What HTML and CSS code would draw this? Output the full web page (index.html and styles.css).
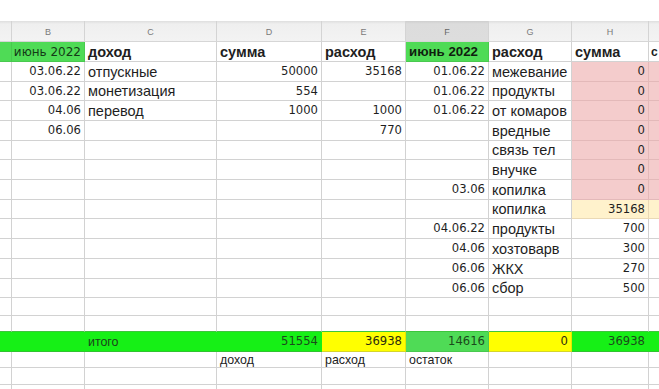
FILE: index.html
```html
<!DOCTYPE html>
<html>
<head>
<meta charset="utf-8">
<link rel="stylesheet" href="styles.css">
</head>
<body>
<div class="topbar"></div>
<div class="sheet">
  <div class="c hd"></div><div class="c hd">B</div><div class="c hd">C</div><div class="c hd">D</div><div class="c hd">E</div><div class="c hd sel">F</div><div class="c hd">G</div><div class="c hd">H</div><div class="c hd last"></div>

  <div class="c mid"></div><div class="c mid num month">июнь 2022</div><div class="c txt b">доход</div><div class="c txt b">сумма</div><div class="c txt b">расход</div><div class="c mid txt b bm">июнь 2022</div><div class="c txt b">расход</div><div class="c txt b">сумма</div><div class="c txt b edge last">с</div>

  <div class="c"></div><div class="c num">03.06.22</div><div class="c txt">отпускные</div><div class="c num">50000</div><div class="c num">35168</div><div class="c num">01.06.22</div><div class="c txt">межевание</div><div class="c num pink">0</div><div class="c pink last"></div>

  <div class="c"></div><div class="c num">03.06.22</div><div class="c txt">монетизация</div><div class="c num">554</div><div class="c"></div><div class="c num">01.06.22</div><div class="c txt">продукты</div><div class="c num pink">0</div><div class="c pink last"></div>

  <div class="c"></div><div class="c num">04.06</div><div class="c txt">перевод</div><div class="c num">1000</div><div class="c num">1000</div><div class="c num">01.06.22</div><div class="c txt">от комаров</div><div class="c num pink">0</div><div class="c pink last"></div>

  <div class="c"></div><div class="c num">06.06</div><div class="c"></div><div class="c"></div><div class="c num">770</div><div class="c"></div><div class="c txt">вредные</div><div class="c num pink">0</div><div class="c pink last"></div>

  <div class="c"></div><div class="c"></div><div class="c"></div><div class="c"></div><div class="c"></div><div class="c"></div><div class="c txt">связь тел</div><div class="c num pink">0</div><div class="c pink last"></div>

  <div class="c"></div><div class="c"></div><div class="c"></div><div class="c"></div><div class="c"></div><div class="c"></div><div class="c txt">внучке</div><div class="c num pink">0</div><div class="c pink last"></div>

  <div class="c"></div><div class="c"></div><div class="c"></div><div class="c"></div><div class="c"></div><div class="c num">03.06</div><div class="c txt">копилка</div><div class="c num pink">0</div><div class="c pink last"></div>

  <div class="c"></div><div class="c"></div><div class="c"></div><div class="c"></div><div class="c"></div><div class="c"></div><div class="c txt">копилка</div><div class="c num cream">35168</div><div class="c cream last"></div>

  <div class="c"></div><div class="c"></div><div class="c"></div><div class="c"></div><div class="c"></div><div class="c num">04.06.22</div><div class="c txt">продукты</div><div class="c num">700</div><div class="c last"></div>

  <div class="c"></div><div class="c"></div><div class="c"></div><div class="c"></div><div class="c"></div><div class="c num">04.06</div><div class="c txt">хозтоварв</div><div class="c num">300</div><div class="c last"></div>

  <div class="c"></div><div class="c"></div><div class="c"></div><div class="c"></div><div class="c"></div><div class="c num">06.06</div><div class="c txt">ЖКХ</div><div class="c num">270</div><div class="c last"></div>

  <div class="c"></div><div class="c"></div><div class="c"></div><div class="c"></div><div class="c"></div><div class="c num">06.06</div><div class="c txt">сбор</div><div class="c num">500</div><div class="c last"></div>

  <div class="c"></div><div class="c"></div><div class="c"></div><div class="c"></div><div class="c"></div><div class="c"></div><div class="c"></div><div class="c"></div><div class="c last"></div>

  <div class="c g-above"></div><div class="c g-above"></div><div class="c g-above"></div><div class="c g-above"></div><div class="c g-above"></div><div class="c g-above"></div><div class="c g-above"></div><div class="c g-above"></div><div class="c g-above last"></div>

  <div class="c lime"></div><div class="c lime"></div><div class="c lime txt sm">итого</div><div class="c lime num gtxt">51554</div><div class="c yel num">36938</div><div class="c mid num gtxt">14616</div><div class="c yel num">0</div><div class="c lime num gtxt">36938</div><div class="c lime last"></div>

  <div class="c"></div><div class="c"></div><div class="c"></div><div class="c txt sm">доход</div><div class="c txt sm">расход</div><div class="c txt sm">остаток</div><div class="c"></div><div class="c"></div><div class="c last"></div>

  <div class="c"></div><div class="c"></div><div class="c"></div><div class="c"></div><div class="c"></div><div class="c"></div><div class="c"></div><div class="c"></div><div class="c last"></div>

  <div class="c"></div><div class="c"></div><div class="c"></div><div class="c"></div><div class="c"></div><div class="c"></div><div class="c"></div><div class="c"></div><div class="c last"></div>
</div>
</body>
</html>
```

FILE: styles.css
```css
* { box-sizing: border-box; }
html, body {
  margin: 0;
  padding: 0;
  background: #ffffff;
  overflow: hidden;
}
body {
  width: 659px;
  height: 389px;
  font-family: "Liberation Sans", Arial, sans-serif;
  color: #1e1e1e;
}
.topbar {
  height: 21px;
  background: #ffffff;
}
.sheet {
  display: grid;
  grid-template-columns: 12px 73px 132px 105px 84px 83px 83px 77px 10px;
  grid-template-rows: 21px 20px 20px 19px 20px 20px 19px 20px 20px 19px 20px 20px 20px 19px 18px 16px 20px 16px 17px 20px;
  width: 659px;
}
.c {
  border-right: 1px solid #d2d2d2;
  border-bottom: 1px solid #d2d2d2;
  white-space: nowrap;
  overflow: hidden;
  display: flex;
  align-items: center;
  font-size: 14.5px;
  line-height: 1;
}
.c.last {
  border-right: none;
}
.hd {
  background: linear-gradient(#dedede 0, #efefef 3px, #f3f3f3 100%);
  justify-content: center;
  font-size: 9px;
  color: #7a7a7a;
  border-right-color: #d4d4d4;
  border-bottom-color: #d6d6d6;
  padding-top: 2px;
}
.hd.sel {
  background: linear-gradient(#cfcfcf 0, #dcdcdc 3px, #dddddd 100%);
  color: #666;
}
.txt {
  justify-content: flex-start;
  padding-left: 3px;
  padding-top: 1px;
}
.edge {
  padding-left: 2px;
  font-size: 12px;
}
.b { font-weight: bold; }
.num {
  justify-content: flex-end;
  padding-right: 3px;
  padding-top: 1px;
  font-family: "DejaVu Sans", Verdana, sans-serif;
  font-size: 11.6px;
}
.month {
  color: #143a17;
  font-size: 12px;
}
.bm {
  font-size: 13.3px;
  color: #0f1f0f;
}
.mid {
  background: #4fdb56;
  border-right-color: #49c94f;
  border-bottom-color: #49c94f;
}
.pink {
  background: #f4cccc;
  border-right-color: #e3b9b9;
  border-bottom-color: #e3b9b9;
}
.cream {
  background: #fff2cc;
  border-right-color: #ead9b5;
  border-bottom-color: #ead9b5;
}
.g-above {
  border-bottom-color: #3cc53c;
}
.lime {
  background: #16f016;
  border-right-color: #16f016;
  border-bottom-color: #30c430;
}
.yel {
  background: #ffff00;
  border-right-color: #e6e600;
  border-bottom-color: #d6d62a;
  color: #2a2a10;
}
.gtxt { color: #1b4a1b; }
.sm {
  font-size: 12.4px;
  color: #222;
}
.lime.sm { color: #1b3f1b; }
```
